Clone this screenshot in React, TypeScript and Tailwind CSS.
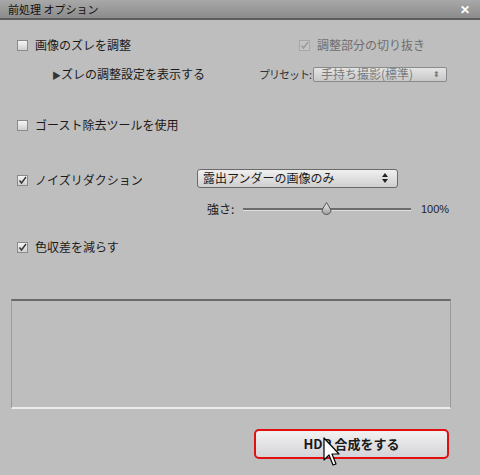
const jp = { fontFamily: '"Noto Sans CJK JP", "Noto Sans", sans-serif' };

const Check = ({ checked, disabled }: { checked?: boolean; disabled?: boolean }) => (
    <span
        className={`w-[11px] h-[11px] flex items-center justify-center border ${disabled ? "border-[#a8a8a8] bg-[#c4c4c4]" : "border-[#8a8a8a] bg-gradient-to-b from-[#f4f4f4] to-[#d0d0d0]"}`}
    >
        {checked && (
            <svg width="9" height="9" viewBox="0 0 9 9">
                <path d="M1.5 4.5 L3.5 7 L8 1" fill="none" stroke={disabled ? "#9a9a9a" : "#333"} strokeWidth="1.4" />
            </svg>
        )}
    </span>
);

const Arrows = () => (
    <svg width="6" height="10" viewBox="0 0 6 10">
        <path d="M3 0 L6 4 L0 4 Z M0 6 L6 6 L3 10 Z" fill="#222" />
    </svg>
);

const App = () => {
    return (
        <div className="w-[480px] h-[475px] bg-[#bebebe] relative overflow-hidden text-[12px] text-[#1a1a1a]" style={jp}>
            <div className="h-[20px] bg-gradient-to-b from-[#a8a8a8] to-[#8c8c8c] border-b-2 border-[#5c5c5c] flex items-center justify-between pl-[8px] pr-[10px]">
                <span className="text-[11px] text-[#111]">前処理 オプション</span>
                <span className="text-white text-[12px] font-bold leading-none">✕</span>
            </div>

            <div className="flex items-center justify-between mt-[17px] pl-[17px] pr-[55px] h-[16px]">
                <div className="flex items-center gap-[7px]">
                    <Check />
                    <span>画像のズレを調整</span>
                </div>
                <div className="flex items-center gap-[7px] text-[#6e6e6e]">
                    <Check checked disabled />
                    <span>調整部分の切り抜き</span>
                </div>
            </div>

            <div className="flex items-center justify-between mt-[12px] pl-[52px] pr-[33px] h-[18px]">
                <span><span className="text-[9px] text-[#333]">▶</span>ズレの調整設定を表示する</span>
                <div className="flex items-center gap-[2px]">
                    <span className="text-[#333] text-[11px] tracking-[-1px]">プリセット:</span>
                    <div className="w-[134px] h-[15px] rounded-[2px] border border-[#8a8a8a] bg-gradient-to-b from-[#e4e4e4] to-[#c8c8c8] flex items-center justify-between pl-[7px] pr-[6px] text-[#7a7a7a]">
                        <span>手持ち撮影(標準)</span>
                        <span className="text-[8px] leading-none">⬍</span>
                    </div>
                </div>
            </div>

            <div className="flex items-center gap-[7px] mt-[34px] pl-[17px] h-[16px]">
                <Check />
                <span>ゴースト除去ツールを使用</span>
            </div>

            <div className="flex items-center mt-[35px] pl-[17px] pr-[82px] h-[20px]">
                <div className="flex items-center gap-[7px] w-[180px] pt-[4px]">
                    <Check checked />
                    <span>ノイズリダクション</span>
                </div>
                <div className="flex-1 h-[19px] rounded-[3px] border border-[#6a6a6a] bg-gradient-to-b from-[#f0f0f0] to-[#cfcfcf] flex items-center justify-between pl-[5px] pr-[9px]">
                    <span>露出アンダーの画像のみ</span>
                    <Arrows />
                </div>
            </div>

            <div className="flex items-center mt-[14px] pl-[207px] h-[14px]">
                <span className="w-[36px]">強さ:</span>
                <div className="relative w-[168px] h-[14px] flex items-center">
                    <div className="w-full h-[3px] bg-[#6c6c6c] border-b border-[#e0e0e0]" />
                    <svg className="absolute left-[78px] top-[0px]" width="11" height="14" viewBox="0 0 11 14">
                        <defs>
                            <linearGradient id="th" x1="0" y1="0" x2="0" y2="1">
                                <stop offset="0" stopColor="#f4f4f4" />
                                <stop offset="1" stopColor="#9c9c9c" />
                            </linearGradient>
                        </defs>
                        <path d="M5.5 0.5 L10 8 A4.5 4.5 0 0 1 1 8 Z" fill="url(#th)" stroke="#555" strokeWidth="1" />
                    </svg>
                </div>
                <span className="ml-[10px] text-[11px] text-[#222]" style={{ fontFamily: '"Liberation Sans", sans-serif' }}>100%</span>
            </div>

            <div className="flex items-center gap-[7px] mt-[23px] pl-[17px] h-[16px]">
                <Check checked />
                <span>色収差を減らす</span>
            </div>

            <div className="mt-[44px] ml-[11px] w-[440px] h-[110px] border-t-2 border-l border-r border-b-2 border-t-[#6a6a6a] border-l-[#9a9a9a] border-r-[#9a9a9a] border-b-[#ececec]" />

            <div className="flex justify-end mt-[20px] pr-[31px]">
                <div className="w-[195px] h-[30px] rounded-[5px] border-2 border-[#e01010] bg-gradient-to-b from-[#f2f2f2] to-[#d4d4d8] flex items-center justify-center font-bold text-[13px] text-[#1a1a1a]">
                    HDR 合成をする
                </div>
            </div>

            <svg className="absolute left-[323px] top-[437px]" width="20" height="32" viewBox="0 0 20 32">
                <path d="M1 1 L1 23 L6 18 L10 28 L13 27 L9 17 L16 17 Z" fill="#fff" stroke="#000" strokeWidth="1.2" strokeLinejoin="round" />
            </svg>
        </div>
    );
};

export default App;
